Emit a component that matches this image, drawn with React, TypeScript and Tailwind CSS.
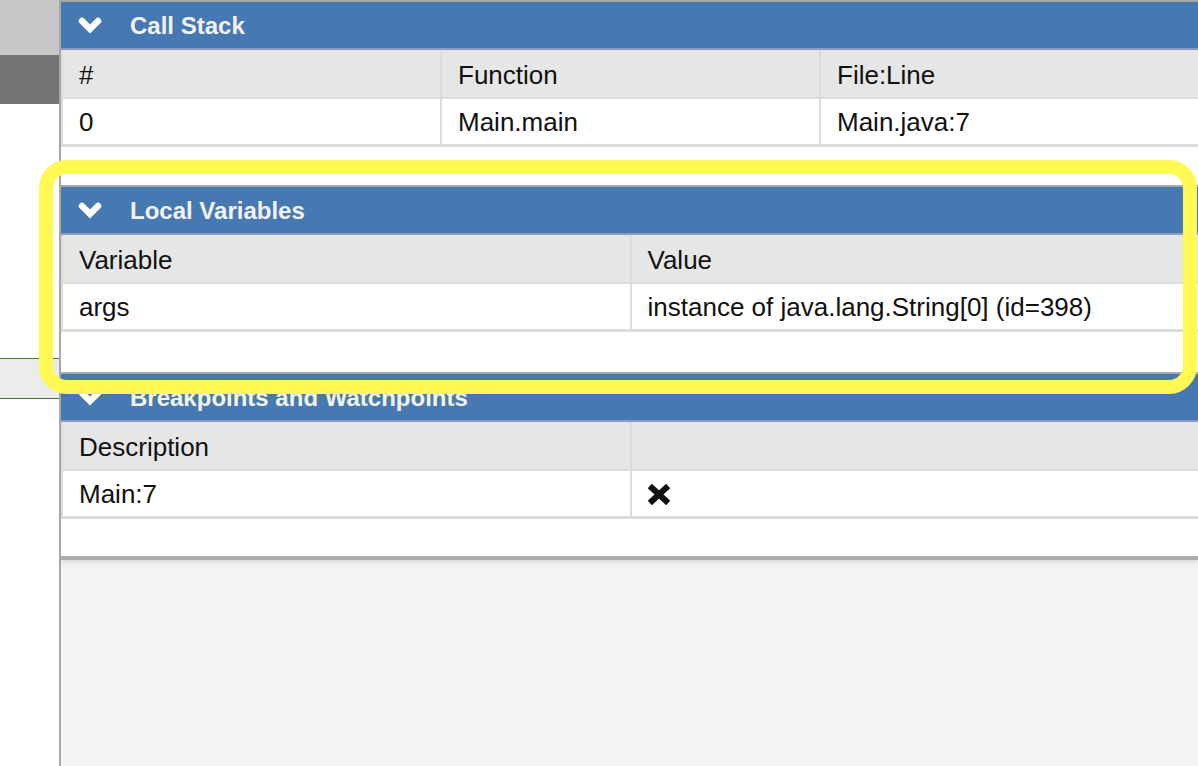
import React from "react";

type Panel = {
  title: string;
  cols: string[];
  rows: React.ReactNode[][];
  gridCls: string;
  padCls: string;
};

const PANELS: Panel[] = [
  {
    title: "Call Stack",
    cols: ["#", "Function", "File:Line"],
    rows: [["0", "Main.main", "Main.java:7"]],
    gridCls: "grid-cols-3",
    padCls: "pb-[38px]",
  },
  {
    title: "Local Variables",
    cols: ["Variable", "Value"],
    rows: [["args", "instance of java.lang.String[0] (id=398)"]],
    gridCls: "grid-cols-2",
    padCls: "pb-[40px]",
  },
  {
    title: "Breakpoints and Watchpoints",
    cols: ["Description", ""],
    rows: [["Main:7", <RemoveIcon key="x" />]],
    gridCls: "grid-cols-2",
    padCls: "pb-[37px]",
  },
];

function Chevron() {
  return (
    <svg width="24" height="17" viewBox="0 0 24 17" className="shrink-0">
      <polyline
        points="4,4 12,12 20,4"
        fill="none"
        stroke="#ffffff"
        strokeWidth="6.5"
        strokeLinecap="round"
        strokeLinejoin="miter"
      />
    </svg>
  );
}

function RemoveIcon() {
  return (
    <svg width="22" height="21" viewBox="0 0 22 21">
      <g stroke="#111111" strokeWidth="6" strokeLinecap="square">
        <line x1="4" y1="4" x2="18" y2="17" />
        <line x1="18" y1="4" x2="4" y2="17" />
      </g>
    </svg>
  );
}

function DebugPanel({ p }: { p: Panel }) {
  return (
    <section className={`bg-white border-t-2 border-[#a9a9a9] ${p.padCls}`}>
      <div className="h-[48px] bg-[#4679b2] border-b-2 border-[#8b9cc2] flex items-center pl-[17px] gap-[28px] pt-[1px]">
        <Chevron />
        <span className="text-[24px] font-bold text-[#f2f2f2] whitespace-nowrap">{p.title}</span>
      </div>
      <div className={`grid ${p.gridCls} gap-[2px] bg-[#dcdcdc] pl-[2px] pb-[3px]`}>
        {p.cols.map((c, i) => (
          <div key={i} className="h-[47px] bg-[#e6e6e6] flex items-center px-[16px] pt-[3px] whitespace-nowrap">
            {c}
          </div>
        ))}
        {p.rows.map((r) =>
          r.map((cell, i) => (
            <div key={i} className="h-[45px] bg-white flex items-center px-[16px] pt-[2px] whitespace-nowrap">
              {cell}
            </div>
          ))
        )}
      </div>
    </section>
  );
}

export default function App() {
  return (
    <div className="relative flex w-[1198px] h-[766px] overflow-hidden bg-white font-['Liberation_Sans',Arial,sans-serif] text-[26px] text-[#111]">
      <aside className="w-[59px] shrink-0 flex flex-col">
        <div className="h-[55px] bg-[#c7c7c7]" />
        <div className="h-[49px] bg-[#747474]" />
        <div className="h-[254px] bg-white" />
        <div className="h-[41px] bg-[#ececec] border-y border-[#3b7d1f]" />
        <div className="flex-1 bg-white" />
      </aside>
      <div className="w-[2px] shrink-0 bg-[#a8a8a8]" />
      <main className="flex-1 flex flex-col bg-[#f3f3f3]">
        {PANELS.map((p) => (
          <DebugPanel key={p.title} p={p} />
        ))}
        <div className="h-[4px] bg-[#acacac] shadow-[0_2px_4px_rgba(0,0,0,0.12)]" />
      </main>
      {/* highlight annotation */}
      <div className="absolute left-[39px] top-[160px] w-[1158px] h-[234px] rounded-[28px] border-[14px] border-[#fff952] pointer-events-none" />
    </div>
  );
}
